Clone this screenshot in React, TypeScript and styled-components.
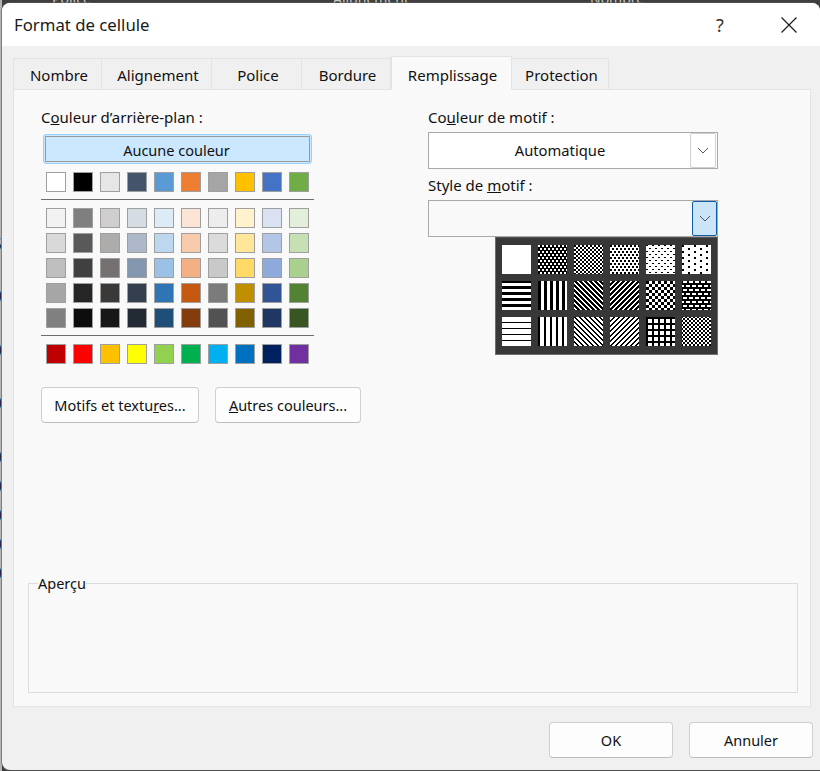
import React from 'react';
import styled, { createGlobalStyle } from 'styled-components';

const GlobalStyle = createGlobalStyle`
  html, body {
    margin: 0;
    padding: 0;
    background: #3f3f3f;
    overflow: hidden;
  }
  * {
    box-sizing: border-box;
  }
`;

const Page = styled.div`
  position: relative;
  width: 820px;
  height: 771px;
  padding: 3px 0 1px 2px;
  overflow: hidden;
  font-family: "Noto Sans", "Open Sans", sans-serif;
  font-size: 14.5px;
  color: #111;
`;

/* sheet that is showing behind the dialog */
const SheetHeader = styled.div`
  position: absolute;
  top: -9px;
  left: 0;
  width: 820px;
  height: 12px;
  display: flex;
  color: #c9c9c9;
  font-size: 14px;
  line-height: 16px;
`;

const SheetHeaderLabel = styled.span<{ $left: number }>`
  position: absolute;
  left: ${(p) => p.$left}px;
`;

const SheetRows = styled.div`
  position: absolute;
  top: 0;
  left: 0;
  width: 2px;
  height: 771px;
  background: #b4b4b4;
  overflow: hidden;
  display: flex;
  flex-direction: column;
  padding-top: 232px;
`;

const SheetRow = styled.div<{ $h: number }>`
  flex: none;
  height: ${(p) => p.$h}px;
  width: 2px;
  direction: rtl;
  font-size: 16px;
  line-height: 24px;
  color: #222;
  white-space: nowrap;
`;

const Dialog = styled.div`
  position: relative;
  height: 767px;
  display: flex;
  flex-direction: column;
  background: #f0f0f0;
  border-radius: 8px 8px 0 8px;
  box-shadow: 0 0 0 1px rgba(90, 90, 90, 0.6);
  overflow: hidden;
`;

const TitleBar = styled.div`
  flex: none;
  height: 43px;
  background: #fff;
  display: flex;
  align-items: center;
  padding-left: 12px;
`;

const Title = styled.div`
  flex: 1;
  font-size: 16.75px;
  color: #1a1a1a;
  padding-bottom: 1px;
`;

const HelpGlyph = styled.div`
  width: 20px;
  text-align: center;
  font-size: 18px;
  color: #333;
  margin-right: 51px;
  margin-top: 1px;
`;

const CloseIcon = styled.svg`
  width: 16px;
  height: 16px;
  margin-right: 23px;
  stroke: #1a1a1a;
  stroke-width: 1.2;
  fill: none;
`;

const Body = styled.div`
  flex: 1;
  min-height: 0;
  display: flex;
  flex-direction: column;
  padding: 11px 0 0 11px;
`;

const TabRow = styled.div`
  flex: none;
  height: 33px;
  display: flex;
  align-items: flex-end;
  position: relative;
  z-index: 1;
  margin-bottom: -1px;
  font-size: 15px;
`;

const Tab = styled.div<{ $w: number; $active?: boolean }>`
  width: ${(p) => p.$w}px;
  height: ${(p) => (p.$active ? 34 : 32)}px;
  display: flex;
  align-items: center;
  justify-content: center;
  background: ${(p) => (p.$active ? '#f9f9f9' : '#f0f0f0')};
  border: 1px solid #e3e3e3;
  border-left-width: ${(p) => (p.$active ? 1 : 0)}px;
  border-bottom-color: ${(p) => (p.$active ? '#f9f9f9' : '#e3e3e3')};
  padding: ${(p) => (p.$active ? '3px 0 0 2px' : '2px 0 0 3px')};
  &:first-child {
    border-left-width: 1px;
  }
`;

const Panel = styled.div`
  width: 798px;
  height: 618px;
  display: flex;
  flex-direction: column;
  background: #f9f9f9;
  border: 1px solid #e3e3e3;
  padding: 0 12px 13px 14px;
`;

const Columns = styled.div`
  flex: 1;
  display: flex;
`;

const LeftColumn = styled.div`
  width: 400px;
  padding-left: 13px;
  padding-top: 17px;
`;

const RightColumn = styled.div`
  width: 290px;
  padding-top: 17px;
`;

const Label = styled.div<{ $top?: number }>`
  height: 21px;
  line-height: 21px;
  font-size: 15px;
  margin-top: ${(p) => p.$top ?? 0}px;
`;

const NoColorButton = styled.div`
  width: 269px;
  height: 30px;
  margin: 6px 0 0 2px;
  display: flex;
  align-items: center;
  justify-content: center;
  border: 1px solid #99d1ff;
  border-radius: 3px;
  background: #cce8ff;
  box-shadow: inset 0 0 0 1px #cce8ff, inset 0 0 0 2px #9a9a9a;
  padding: 1px 2px 0 0;
`;

const SwatchRow = styled.div`
  display: flex;
  gap: 7px;
  padding-left: 5px;
`;

const SwatchGrid = styled.div`
  display: flex;
  flex-direction: column;
  gap: 5px;
`;

const Swatch = styled.div<{ $color: string }>`
  width: 20px;
  height: 20px;
  background: ${(p) => p.$color};
  border: 1px solid #9f9f9f;
`;

const ThemeSwatches = styled(SwatchRow)`
  margin-top: 8px;
`;

const Separator = styled.div`
  width: 273px;
  height: 1px;
  background: #6d6d6d;
  margin-top: 7px;
  margin-bottom: 8px;
`;

const ButtonRow = styled.div`
  display: flex;
  gap: 16px;
  margin-top: 23px;
`;

const PushButton = styled.div<{ $w: number }>`
  width: ${(p) => p.$w}px;
  height: 36px;
  display: flex;
  align-items: center;
  justify-content: center;
  background: #fdfdfd;
  border: 1px solid #cfcfcf;
  border-bottom-color: #bdbdbd;
  border-radius: 4px;
  padding-bottom: 1px;
  white-space: pre;
`;

const ComboWrap = styled.div`
  position: relative;
`;

const Combo = styled.div<{ $bg: string }>`
  height: 37px;
  margin-top: 4px;
  display: flex;
  align-items: center;
  justify-content: flex-end;
  background: ${(p) => p.$bg};
  border: 1px solid #a8a8ad;
  padding-right: 1px;
  position: relative;
`;

const ComboValue = styled.div`
  position: absolute;
  left: 0;
  right: 26px;
  text-align: center;
  font-size: 14.75px;
  padding-bottom: 1px;
`;

const ComboButton = styled.div<{ $focused?: boolean }>`
  width: ${(p) => (p.$focused ? 25 : 26)}px;
  height: 35px;
  margin-right: ${(p) => (p.$focused ? -1 : 0)}px;
  display: flex;
  align-items: center;
  justify-content: center;
  background: ${(p) => (p.$focused ? '#cce4f7' : '#fff')};
  border: 1px solid ${(p) => (p.$focused ? '#0a5ea8' : '#d0d0d0')};
  border-radius: 2px;
`;

const Chevron = styled.svg`
  width: 12px;
  height: 7px;
  fill: none;
  stroke: #555;
  stroke-width: 1;
`;

const PatternPopup = styled.div`
  position: absolute;
  top: 100%;
  right: 0;
  width: 223px;
  height: 118px;
  background: #383838;
  border: 1px solid #6e6e6e;
  border-top-color: #555;
  padding: 7px 0 0 6px;
  display: grid;
  grid-template-columns: repeat(6, 29px);
  grid-auto-rows: 29px;
  column-gap: 7px;
  row-gap: 7px;
  z-index: 2;
`;

const PatternCanvas = styled.svg`
  display: block;
  width: 29px;
  height: 29px;
  background: #fff;
  shape-rendering: crispEdges;
`;

const Preview = styled.fieldset`
  flex: none;
  height: 116px;
  margin: 0;
  padding: 0 0 0 9px;
  border: 1px solid #dcdcdc;
  min-width: 0;
`;

const PreviewLegend = styled.legend`
  padding: 0;
  line-height: 13px;
  height: 12px;
`;

const Footer = styled.div`
  flex: none;
  height: 62px;
  display: flex;
  justify-content: flex-end;
  align-items: flex-start;
  gap: 16px;
  padding: 15px 7px 0 0;
`;

const THEME = ['#ffffff', '#000000', '#e7e6e6', '#44546a', '#5b9bd5', '#ed7d31', '#a5a5a5', '#ffc000', '#4472c4', '#70ad47'];

const TINTS = [
  ['#f2f2f2', '#7f7f7f', '#d0cece', '#d6dce4', '#ddebf7', '#fce4d6', '#ededed', '#fff2cc', '#d9e1f2', '#e2efda'],
  ['#d9d9d9', '#595959', '#aeabab', '#adb9ca', '#bdd7ee', '#f8cbad', '#dbdbdb', '#ffe699', '#b4c6e7', '#c6e0b4'],
  ['#bfbfbf', '#404040', '#757171', '#8497b0', '#9bc2e6', '#f4b084', '#c9c9c9', '#ffd966', '#8ea9db', '#a9d08e'],
  ['#a6a6a6', '#262626', '#3b3838', '#333f4f', '#2f75b5', '#c65911', '#7b7b7b', '#bf8f00', '#305496', '#548235'],
  ['#808080', '#0d0d0d', '#171717', '#222b35', '#1f4e78', '#833c0b', '#525252', '#806000', '#203764', '#375623'],
];

const STANDARD = ['#c00000', '#ff0000', '#ffc000', '#ffff00', '#92d050', '#00b050', '#00b0f0', '#0070c0', '#002060', '#7030a0'];

// fill bitmaps, '#' is black. scale 1.5 for the ones that come from excel's
// 8x8 cells at 150%, scale 1 where the tile is written in real pixels
type Pattern = { tile: string[]; scale: number };

const PATTERNS: Pattern[] = [
  { tile: ['.'], scale: 1 },
  { tile: ['..##', '..##', '####', '##..', '##..', '####'], scale: 1 },
  { tile: ['##..', '##..', '..##', '..##'], scale: 1 },
  { tile: ['##..', '##..', '....', '..##', '..##', '....'], scale: 1 },
  { tile: ['##....', '......', '......', '...##.', '......', '......'], scale: 1 },
  { tile: ['#.......', '........', '....#...', '........'], scale: 1.5 },
  { tile: ['####', '....', '....', '####'], scale: 1.5 },
  { tile: ['##..'], scale: 1.5 },
  { tile: ['###..', '.###.', '..###', '#..##', '##..#'], scale: 1 },
  { tile: ['..###', '.###.', '###..', '##..#', '#..##'], scale: 1 },
  { tile: ['##..', '##..', '..##', '..##'], scale: 1.5 },
  { tile: ['#....#', '#....#', '######', '######', '..##..', '..##..', '######', '######'], scale: 1 },
  { tile: ['....', '....', '....', '####'], scale: 1.5 },
  { tile: ['#...'], scale: 1.5 },
  { tile: ['##...', '.##..', '..##.', '...##', '#...#'], scale: 1 },
  { tile: ['...##', '..##.', '.##..', '##...', '#...#'], scale: 1 },
  { tile: ['####', '#...', '#...', '#...'], scale: 1.5 },
  { tile: ['#..#', '.##.', '.##.', '#..#'], scale: 1 },
];

function patternPath({ tile, scale }: Pattern): string {
  let d = '';
  for (let y = 0; y < 29; y++) {
    const row = tile[Math.floor(y / scale) % tile.length];
    let start = -1;
    for (let x = 0; x <= 29; x++) {
      const dark = x < 29 && row[Math.floor(x / scale) % row.length] === '#';
      if (dark && start < 0) start = x;
      if (!dark && start >= 0) {
        d += `M${start} ${y}h${x - start}v1h${start - x}z`;
        start = -1;
      }
    }
  }
  return d;
}

const PatternSwatch: React.FC<{ pattern: Pattern }> = ({ pattern }) => (
  <PatternCanvas viewBox="0 0 29 29">
    <path d={patternPath(pattern)} fill="#000" />
  </PatternCanvas>
);

const ChevronDown: React.FC = () => (
  <Chevron viewBox="0 0 12 7">
    <path d="M1 1l5 5 5-5" />
  </Chevron>
);

const SHEET_ROWS = [52, 54, 53, 54, 29, 29, 29, 29, 28];

const App: React.FC = () => {
  return (
    <Page>
      <GlobalStyle />
      <SheetHeader>
        <SheetHeaderLabel $left={52}>Police</SheetHeaderLabel>
        <SheetHeaderLabel $left={333}>Alignement</SheetHeaderLabel>
        <SheetHeaderLabel $left={590}>Nombre</SheetHeaderLabel>
      </SheetHeader>
      <SheetRows>
        {SHEET_ROWS.map((h, i) => (
          <SheetRow key={i} $h={h}>
            {i === 0 ? '5' : '0'}
          </SheetRow>
        ))}
      </SheetRows>
      <Dialog>
        <TitleBar>
          <Title>Format de cellule</Title>
          <HelpGlyph>?</HelpGlyph>
          <CloseIcon viewBox="0 0 16 16">
            <path d="M0.5 0.5l15 15M15.5 0.5l-15 15" />
          </CloseIcon>
        </TitleBar>
        <Body>
          <TabRow>
            <Tab $w={89}>Nombre</Tab>
            <Tab $w={110}>Alignement</Tab>
            <Tab $w={90}>Police</Tab>
            <Tab $w={89}>Bordure</Tab>
            <Tab $w={121} $active>Remplissage</Tab>
            <Tab $w={97}>Protection</Tab>
          </TabRow>
          <Panel>
            <Columns>
              <LeftColumn>
                <Label>C<u>o</u>uleur d’arrière-plan :</Label>
                <NoColorButton>Aucune couleur</NoColorButton>
                <ThemeSwatches>
                  {THEME.map((c) => (
                    <Swatch key={c} $color={c} />
                  ))}
                </ThemeSwatches>
                <Separator />
                <SwatchGrid>
                  {TINTS.map((row, i) => (
                    <SwatchRow key={i}>
                      {row.map((c) => (
                        <Swatch key={c} $color={c} />
                      ))}
                    </SwatchRow>
                  ))}
                </SwatchGrid>
                <Separator />
                <SwatchRow>
                  {STANDARD.map((c) => (
                    <Swatch key={c} $color={c} />
                  ))}
                </SwatchRow>
                <ButtonRow>
                  <PushButton $w={158}>
                    <span>Motifs et textu<u>r</u>es...</span>
                  </PushButton>
                  <PushButton $w={146}>
                    <span><u>A</u>utres couleurs...</span>
                  </PushButton>
                </ButtonRow>
              </LeftColumn>
              <RightColumn>
                <Label>Co<u>u</u>leur de motif :</Label>
                <Combo $bg="#fff">
                  <ComboValue>Automatique</ComboValue>
                  <ComboButton>
                    <ChevronDown />
                  </ComboButton>
                </Combo>
                <Label $top={6}>Style de <u>m</u>otif :</Label>
                <ComboWrap>
                  <Combo $bg="#f9f9f9">
                    <ComboButton $focused>
                      <ChevronDown />
                    </ComboButton>
                  </Combo>
                  <PatternPopup>
                    {PATTERNS.map((pattern, i) => (
                      <PatternSwatch key={i} pattern={pattern} />
                    ))}
                  </PatternPopup>
                </ComboWrap>
              </RightColumn>
            </Columns>
            <Preview>
              <PreviewLegend>Aperçu</PreviewLegend>
            </Preview>
          </Panel>
          <Footer>
            <PushButton $w={124}>OK</PushButton>
            <PushButton $w={124}>Annuler</PushButton>
          </Footer>
        </Body>
      </Dialog>
    </Page>
  );
};

export default App;
